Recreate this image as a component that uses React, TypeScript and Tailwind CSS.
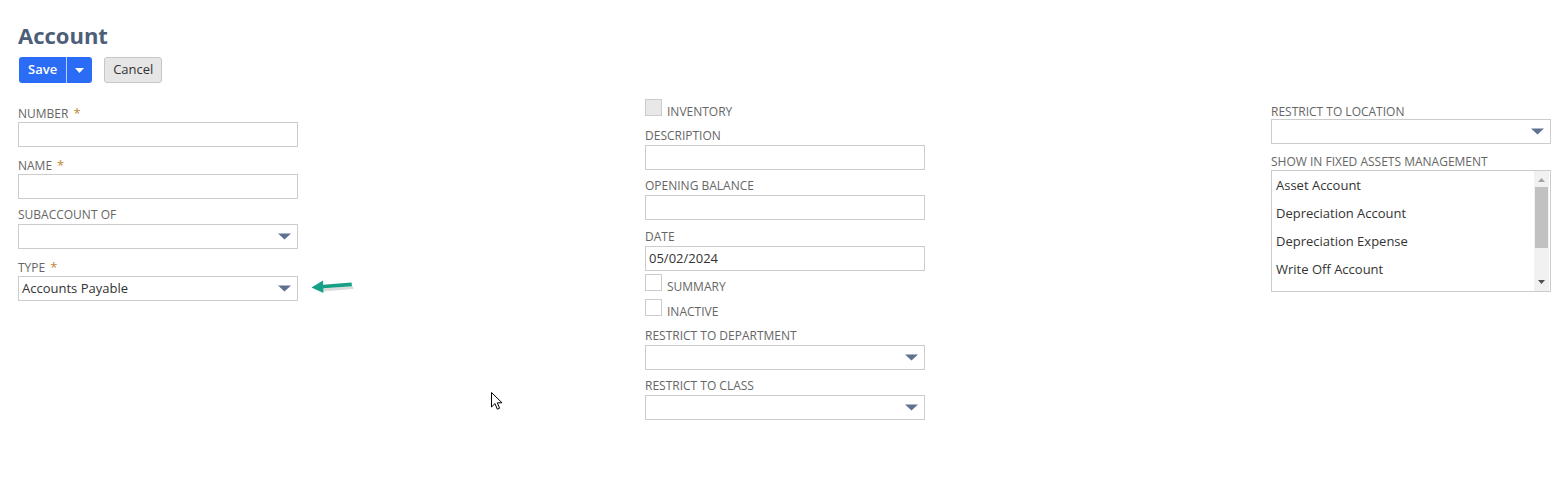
import React from "react";

const font = { fontFamily: '"Open Sans", "Liberation Sans", sans-serif' };

function Caret() {
  return (
    <svg width="13" height="7" viewBox="0 0 13 7" className="block">
      <path d="M0 0.5 H13 L6.5 6.5 Z" fill="#5f7190" />
    </svg>
  );
}

function Label({ text, required }: { text: string; required?: boolean }) {
  return (
    <div className="h-[16px] text-[12px] leading-[16px] uppercase text-[#666666]">
      {text}
      {required && <span className="ml-[5px] text-[13px] text-[#c1852b]">*</span>}
    </div>
  );
}

function TextBox({ value }: { value?: string }) {
  return (
    <div className="mt-[1px] flex h-[25px] w-[280px] items-center border border-[#cccccc] bg-white px-[3px] text-[13px] text-[#333333]">
      {value}
    </div>
  );
}

function SelectBox({ value }: { value?: string }) {
  return (
    <div className="mt-[1px] flex h-[25px] w-[280px] items-center justify-between border border-[#cccccc] bg-white pl-[3px] pr-[6px] text-[13px] text-[#333333]">
      <span>{value}</span>
      <Caret />
    </div>
  );
}

function Check({ text, disabled }: { text: string; disabled?: boolean }) {
  return (
    <div className="flex h-[17px] items-start">
      <div
        className={
          "h-[17px] w-[17px] shrink-0 border border-[#cccccc] " +
          (disabled ? "bg-[#e8e8e8]" : "bg-white")
        }
      />
      <span className="ml-[5px] mt-[5px] text-[12px] leading-[16px] uppercase text-[#666666]">
        {text}
      </span>
    </div>
  );
}

function GreenArrow() {
  return (
    <svg width="44" height="16" viewBox="0 0 44 16" className="ml-[13px] mt-[3px]">
      <path d="M11 10.5 L42 8 L42.5 11 L11.5 13.4 Z" fill="#000" opacity="0.14" />
      <path d="M9 7 L40.5 4.6 L41 8.2 L9.4 10.6 Z" fill="#17a085" />
      <path d="M0.5 9.4 L12 2.6 L12.4 15 Z" fill="#17a085" />
    </svg>
  );
}

export default function App() {
  const assets = ["Asset Account", "Depreciation Account", "Depreciation Expense", "Write Off Account"];

  return (
    <div className="relative h-[499px] w-full overflow-hidden bg-white" style={font}>
      <div className="px-[18px] pt-[20px]">
        <h1 className="text-[22px] font-bold leading-[30px] text-[#4d5e78]">Account</h1>

        <div className="mt-[7px] flex items-center">
          <div className="ml-[1px] flex h-[26px] overflow-hidden rounded-[3px] bg-[#2b6cf6]">
            <button className="px-[9px] text-[13px] font-semibold text-white">Save</button>
            <div className="w-px bg-[#bcd0fb]" />
            <div className="flex w-[25px] items-center justify-center">
              <svg width="9" height="5" viewBox="0 0 9 5">
                <path d="M0 0 H9 L4.5 5 Z" fill="#fff" />
              </svg>
            </div>
          </div>
          <button className="ml-[12px] h-[26px] rounded-[3px] border border-[#c6c6c6] bg-[#e6e6e6] px-[8px] text-[13px] text-[#333333]">
            Cancel
          </button>
        </div>

        <div className="grid grid-cols-[627px_626px_1fr]">
          {/* column 1 */}
          <div className="flex flex-col pt-[22px]">
            <Label text="Number" required />
            <TextBox />
            <div className="mt-[10px]">
              <Label text="Name" required />
              <TextBox />
            </div>
            <div className="mt-[8px]">
              <Label text="Subaccount of" />
              <SelectBox />
            </div>
            <div className="mt-[10px]">
              <Label text="Type" required />
              <div className="flex items-start">
                <SelectBox value="Accounts Payable" />
                <GreenArrow />
              </div>
            </div>
          </div>

          {/* column 2 */}
          <div className="flex flex-col pt-[16px]">
            <Check text="Inventory" disabled />
            <div className="mt-[12px]">
              <Label text="Description" />
              <TextBox />
            </div>
            <div className="mt-[8px]">
              <Label text="Opening Balance" />
              <TextBox />
            </div>
            <div className="mt-[9px]">
              <Label text="Date" />
              <TextBox value="05/02/2024" />
            </div>
            <div className="mt-[3px]">
              <Check text="Summary" />
            </div>
            <div className="mt-[8px]">
              <Check text="Inactive" />
            </div>
            <div className="mt-[12px]">
              <Label text="Restrict to Department" />
              <SelectBox />
            </div>
            <div className="mt-[8px]">
              <Label text="Restrict to Class" />
              <SelectBox />
            </div>
          </div>

          {/* column 3 */}
          <div className="flex flex-col pt-[21px]">
            <Label text="Restrict to Location" />
            <div className="-mt-[2px]">
              <SelectBox />
            </div>
            <div className="mt-[10px]">
              <Label text="Show in Fixed Assets Management" />
              <div className="flex h-[122px] w-[280px] border border-[#cccccc] bg-white">
                <div className="flex flex-1 flex-col pl-[4px] pt-[4px]">
                  {assets.map((a) => (
                    <div key={a} className="h-[28px] text-[13px] leading-[20px] text-[#333333]">
                      {a}
                    </div>
                  ))}
                </div>
                <div className="mr-px flex w-[15px] flex-col items-center bg-[#f1f1f1]">
                  <svg width="7" height="4" viewBox="0 0 7 4" className="mt-[7px]">
                    <path d="M0 4 H7 L3.5 0 Z" fill="#a3a3a3" />
                  </svg>
                  <div className="mt-[5px] h-[61px] w-[13px] bg-[#c1c1c1]" />
                  <div className="flex-1" />
                  <svg width="7" height="4" viewBox="0 0 7 4" className="mb-[7px]">
                    <path d="M0 0 H7 L3.5 4 Z" fill="#505050" />
                  </svg>
                </div>
              </div>
            </div>
          </div>
        </div>
      </div>

      {/* mouse pointer */}
      <svg width="12" height="19" viewBox="0 0 12 19" className="absolute left-[491px] top-[392px]">
        <path
          d="M0.5 0.5 L0.5 15 L4 11.6 L6.3 17.2 L8.6 16.2 L6.3 10.8 L11 10.8 Z"
          fill="#fff"
          stroke="#000"
          strokeWidth="1"
          strokeLinejoin="round"
        />
      </svg>
    </div>
  );
}
